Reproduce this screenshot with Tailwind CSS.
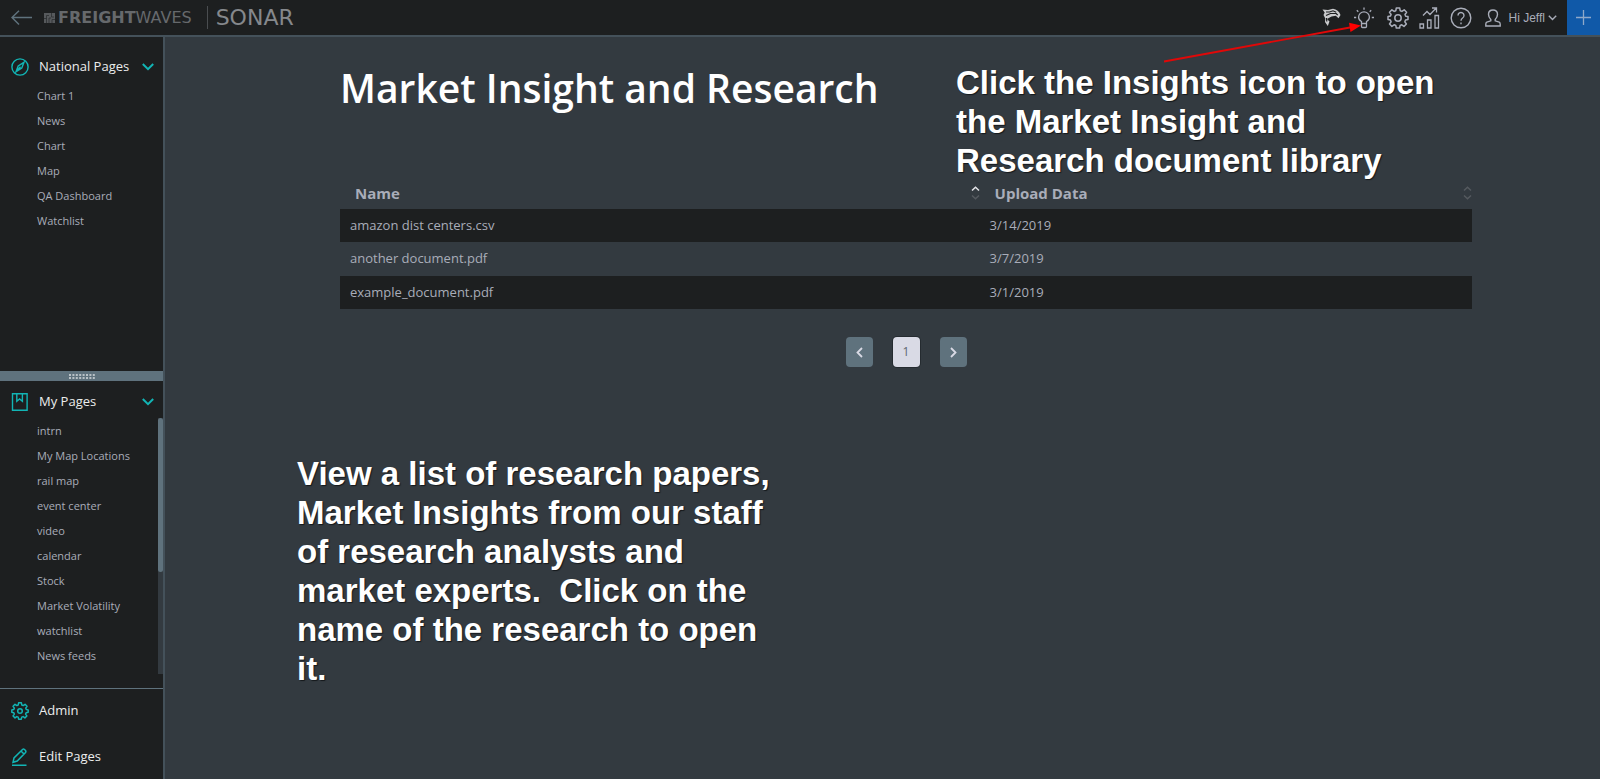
<!DOCTYPE html>
<html lang="en">
<head>
  <meta charset="UTF-8" />
  <meta name="viewport" content="width=device-width, initial-scale=1.0" />
  <title>SONAR - Market Insight and Research</title>
  <script src="https://cdn.jsdelivr.net/npm/@tailwindcss/browser@4"></script>
</head>
<body class="relative h-screen flex flex-col overflow-hidden bg-[#333a40] text-[#a9adb9] font-['Open_Sans','Noto_Sans',sans-serif]">

  <!-- Top bar -->
  <header class="h-[37px] shrink-0 flex items-center bg-[#1d1f20] border-b-2 border-[#44515a]">
    <button class="ml-[11px] text-[#5f727d]" aria-label="Back">
      <svg class="w-[22px] h-4" viewBox="0 0 22 16" fill="none" stroke="currentColor" stroke-width="1.5"><path d="M21 7.500H1M8 .8 1 7.500l7 7"/></svg>
    </button>
    <a href="#" class="ml-[11px] flex items-center text-[#66696c] font-['DejaVu_Sans',sans-serif] text-base leading-5">
      <svg class="w-[11px] h-[10px] mr-[3px]" viewBox="0 0 11 10"><path fill="#56595c" d="M0 0h11v10H0z"/><path d="M2.500 10V2.500H5M5 10V5h2M7.500 0v4H10M8 10V6.500h3M0 5.500h2.500" fill="none" stroke="#2c2e30" stroke-width=".8"/></svg>
      <b>FREIGHT</b><span>WAVES</span>
    </a>
    <span class="ml-[15px] w-px h-[23px] bg-[#4a4d50]"></span>
    <a href="#" class="ml-2 text-[#85888c] font-['DejaVu_Sans',sans-serif] text-[22px] leading-6">SONAR</a>

    <div class="ml-auto h-full flex items-center text-[#a9adb9]">
      <button class="mr-[13px]" aria-label="Hawk">
        <svg class="w-[19px] h-[19px]" viewBox="0 0 19 19"><path fill="#c9cacc" d="M.5 1.500 6 2l5-1.200q5.500 1 7.500 6.200l-2 3.200-2.700-2.400-4.300.8L5 11l2.500 2.500-1.700 4.500L3 14l.3-3.500L1.500 7l1.200-2.500z"/><path fill="none" stroke="#1d1f20" stroke-width="1.200" d="M4 4h3.500L11 2.800l3.200 1.500M4 7.500 8.500 5.500h5.700l1.500 1.700M4.800 13.500 4.500 10"/></svg>
      </button>
      <button class="mr-[13px]" aria-label="Insights">
        <svg class="w-5 h-[22px]" viewBox="0 0 20 22" fill="none" stroke="currentColor" stroke-width="1.300"><path d="M7.500 16.500v-2C5.500 13.500 4.600 12 4.600 10.200a5.400 5.400 0 0 1 10.800 0c0 1.800-.9 3.300-2.900 4.300v2zM7.500 16.500v3q0 1 1 1h3q1 0 1-1v-3M10 .5v2.200M0 10.500h2.200M17.800 10.500H20M2.800 3.300l1.500 1.500M17.200 3.300l-1.500 1.500"/></svg>
      </button>
      <button class="mr-[10px]" aria-label="Settings">
        <svg class="w-[22px] h-[22px]" viewBox="0 0 22 22" fill="none" stroke="currentColor" stroke-width="1.500" stroke-linejoin="round"><path d="M9.300 1h3.400l.5 2.700 1.700.7 2.300-1.600 2.400 2.400L18 7.500l.7 1.700 2.300.4v3l-2.500.5-.7 1.700 1.600 2.200-2.400 2.400-2.200-1.600-1.700.7-.5 2.500H9.300l-.5-2.500-1.700-.7-2.200 1.600L2.500 17l1.600-2.200-.7-1.700L1 12.600v-3l2.400-.5.7-1.600-1.600-2.300 2.400-2.400 2.300 1.600 1.600-.7z"/><circle cx="11" cy="11" r="3.200"/></svg>
      </button>
      <button class="mr-[10px]" aria-label="Statistics">
        <svg class="w-[21px] h-[22px]" viewBox="0 0 21 22" fill="none" stroke="currentColor" stroke-width="1.300"><path d="M1 17h3.500v4H1zM8.500 13H12v8H8.500zM16 8.500h3.500V21H16zM4 8.500l4-4 3 3L17 1.300M13 1h4.500v4.500"/></svg>
      </button>
      <button class="mr-[13px]" aria-label="Help">
        <svg class="w-[22px] h-[22px]" viewBox="0 0 22 22" fill="none" stroke="currentColor" stroke-width="1.400"><circle cx="11" cy="11" r="9.800"/><path d="M8 8.500a3 3 0 1 1 4.600 2.500c-1.200.8-1.600 1.300-1.600 2.700M11 15.500v1.700"/></svg>
      </button>
      <button class="mr-[10px] flex items-center gap-2 text-xs font-['Liberation_Sans',sans-serif]">
        <svg class="w-4 h-[18px]" viewBox="0 0 16 18" fill="none" stroke="currentColor" stroke-width="1.400"><path d="M5.800 10.500C4.300 9 3.500 7.300 3.500 5.200 3.500 2.600 5.300 1 8 1s4.500 1.600 4.500 4.200c0 2.100-.8 3.800-2.300 5.300v1.300l4 1.400q1 .5 1 2V17H.8v-1.800q0-1.500 1-2l4-1.400z"/></svg>
        <span class="flex items-center gap-[3px]">Hi Jeffl
          <svg class="w-[9px] h-[6px]" viewBox="0 0 9 6" fill="none" stroke="currentColor" stroke-width="1.400"><path d="m.8.8 3.700 3.700L8.200.8"/></svg>
        </span>
      </button>
      <button class="w-[33px] h-full flex items-center justify-center bg-[#1059a8]" aria-label="Add page">
        <svg class="w-[15px] h-[15px]" viewBox="0 0 15 15" stroke="#8fa9c9" stroke-width="1.300"><path d="M7.500 0v15M0 7.500h15"/></svg>
      </button>
    </div>
  </header>

  <div class="flex-1 min-h-0 flex">
    <!-- Sidebar -->
    <nav class="w-[165px] shrink-0 flex flex-col bg-[#1d1f20] border-r-2 border-[#44515a] text-[11px]">
      <section class="flex-1 min-h-0 pt-[18px]">
        <button class="w-full h-6 pl-[11px] pr-[9px] flex items-center text-[13px] font-medium text-[#eceded]">
          <svg class="w-[18px] h-[18px] mr-[10px]" viewBox="0 0 18 18" fill="none" stroke="#12b5b5" stroke-width="1.400"><circle cx="9" cy="9" r="8.100"/><path d="M13 4.300 10.800 10 5 13.700 7.200 8zM5 13.700l4.500-5"/></svg>
          National Pages
          <svg class="w-3 h-2 ml-auto" viewBox="0 0 12 8" fill="none" stroke="#12b5b5" stroke-width="2"><path d="m.8 1 5.200 5.200L11.200 1"/></svg>
        </button>
        <ul class="mt-1 pl-[37px] leading-[25px]">
          <li><a href="#">Chart 1</a></li>
          <li><a href="#">News</a></li>
          <li><a href="#">Chart</a></li>
          <li><a href="#">Map</a></li>
          <li><a href="#">QA Dashboard</a></li>
          <li><a href="#">Watchlist</a></li>
        </ul>
      </section>

      <!-- Drag handle between the two lists -->
      <div class="h-[10px] shrink-0 flex items-center justify-center bg-[#5f727d]">
        <svg class="w-[26px] h-[5px]" viewBox="0 0 26 5"><path d="M0 1h26M0 4h26" stroke="#b9c1c6" stroke-width="2" stroke-dasharray="2 1.400"/></svg>
      </div>

      <section class="h-[307px] shrink-0 flex flex-col pt-[9px] pb-[14px]">
        <button class="w-full h-6 pl-[11px] pr-[9px] flex items-center text-[13px] font-medium text-[#eceded]">
          <svg class="w-[18px] h-[18px] mr-[10px]" viewBox="0 0 18 18" fill="none" stroke="#12b5b5" stroke-width="1.400"><path d="M1.500.8h14.600v16.400H1.500zM5.800.8v7.400l2.800-2.300 2.800 2.300V.8"/></svg>
          My Pages
          <svg class="w-3 h-2 ml-auto" viewBox="0 0 12 8" fill="none" stroke="#12b5b5" stroke-width="2"><path d="m.8 1 5.200 5.200L11.200 1"/></svg>
        </button>
        <div class="flex-1 min-h-0 mt-1 flex justify-between">
          <ul class="pl-[37px] leading-[25px]">
            <li><a href="#">intrn</a></li>
            <li><a href="#">My Map Locations</a></li>
            <li><a href="#">rail map</a></li>
            <li><a href="#">event center</a></li>
            <li><a href="#">video</a></li>
            <li><a href="#">calendar</a></li>
            <li><a href="#">Stock</a></li>
            <li><a href="#">Market Volatility</a></li>
            <li><a href="#">watchlist</a></li>
            <li><a href="#">News feeds</a></li>
          </ul>
          <div class="w-[5px] bg-[#333a40]">
            <div class="h-3/5 rounded-sm bg-[#5f727d]"></div>
          </div>
        </div>
      </section>

      <div class="flex flex-col gap-[2px] border-t border-[#5f727d] text-[13px] font-medium text-[#eceded]">
        <a href="#" class="h-11 pl-[11px] flex items-center gap-[10px]">
          <svg class="w-[18px] h-[18px]" viewBox="0 0 22 22" fill="none" stroke="#12b5b5" stroke-width="1.800" stroke-linejoin="round"><path d="M9.300 1h3.400l.5 2.700 1.700.7 2.300-1.600 2.400 2.400L18 7.500l.7 1.700 2.300.4v3l-2.500.5-.7 1.700 1.600 2.200-2.400 2.400-2.200-1.600-1.700.7-.5 2.500H9.300l-.5-2.500-1.700-.7-2.200 1.600L2.500 17l1.600-2.200-.7-1.700L1 12.600v-3l2.400-.5.7-1.600-1.600-2.300 2.400-2.400 2.300 1.600 1.600-.7z"/><circle cx="11" cy="11" r="2.800"/></svg>
          Admin
        </a>
        <a href="#" class="h-11 pl-[11px] flex items-center gap-[10px]">
          <svg class="w-[18px] h-[18px]" viewBox="0 0 18 18" fill="none" stroke="#12b5b5" stroke-width="1.500"><path d="M2 14.300 3 10 11.500 1.500q1-.8 2 0l1 1q.8 1 0 2L6.200 13zM10 3l3 3M1 17.200h14.500"/></svg>
          Edit Pages
        </a>
      </div>
    </nav>

    <!-- Document library -->
    <main class="flex-1 min-w-0 pt-6">
      <div class="pl-[175px] pr-32">
        <h1 class="text-[39px] leading-[54px] font-semibold text-white">Market Insight and Research</h1>

        <table class="mt-16 w-full table-fixed text-left text-[13px]">
          <thead>
            <tr class="h-[30px] text-[15px]">
              <th class="w-[56.500%] pl-[15px] pb-[2px] font-bold">
                <button class="w-full flex items-center justify-between">Name
                  <svg class="w-[9px] h-[14px]" viewBox="0 0 9 14" fill="none" stroke-width="1.500"><path d="m1 4.500 3.500-3.300L8 4.500" stroke="#e4e5e8"/><path d="m1 9.500 3.500 3.300L8 9.500" stroke="#555a5f"/></svg>
                </button>
              </th>
              <th class="pl-[15px] pb-[2px] font-bold">
                <button class="w-full flex items-center justify-between">Upload Data
                  <svg class="w-[9px] h-[14px]" viewBox="0 0 9 14" fill="none" stroke="#555a5f" stroke-width="1.500"><path d="m1 4.500 3.500-3.300L8 4.500M1 9.500l3.500 3.300L8 9.500"/></svg>
                </button>
              </th>
            </tr>
          </thead>
          <tbody>
            <tr class="h-[33px] bg-[#1d1f20]">
              <td class="pl-[10px]"><a href="#">amazon dist centers.csv</a></td>
              <td class="pl-[10px]">3/14/2019</td>
            </tr>
            <tr class="h-[34px]">
              <td class="pl-[10px]"><a href="#">another document.pdf</a></td>
              <td class="pl-[10px]">3/7/2019</td>
            </tr>
            <tr class="h-[33px] bg-[#1d1f20]">
              <td class="pl-[10px]"><a href="#">example_document.pdf</a></td>
              <td class="pl-[10px]">3/1/2019</td>
            </tr>
          </tbody>
        </table>

        <div class="mt-7 flex justify-center gap-5 text-xs">
          <button class="w-[27px] h-[30px] flex items-center justify-center rounded bg-[#5f727d]" aria-label="Previous page">
            <svg class="w-[7px] h-[11px]" viewBox="0 0 7 11" fill="none" stroke="#d9dae5" stroke-width="1.800"><path d="M6 1 1.500 5.500 6 10"/></svg>
          </button>
          <button class="w-[27px] h-[30px] rounded bg-[#d9dae5] text-[#5f6670] ring-1 ring-[#252b30]">1</button>
          <button class="w-[27px] h-[30px] flex items-center justify-center rounded bg-[#5f727d]" aria-label="Next page">
            <svg class="w-[7px] h-[11px]" viewBox="0 0 7 11" fill="none" stroke="#d9dae5" stroke-width="1.800"><path d="M1 1l4.500 4.500L1 10"/></svg>
          </button>
        </div>
      </div>

      <p class="mt-[87px] ml-[132px] w-[490px] whitespace-pre-wrap font-['Liberation_Sans',sans-serif] font-bold text-[33px] leading-[39px] text-white text-shadow-[1px_1px_1px_#14181b]">View a list of research papers, Market Insights from our staff of research analysts and market experts.  Click on the name of the research to open it.</p>
    </main>
  </div>

  <!-- Callout pointing at the Insights icon -->
  <svg class="absolute top-[22px] right-[238px] w-[200px] h-[42px]" viewBox="0 0 200 42"><path d="M2 39.500 188 5.500" stroke="#e00808" stroke-width="1.800"/><path d="M199 3.500 187 .8 188.500 10z" fill="#f00"/></svg>
  <p class="absolute top-[63px] right-[154px] w-[490px] font-['Liberation_Sans',sans-serif] font-bold text-[33px] leading-[39px] text-white text-shadow-[1px_1px_1px_#14181b]">Click the Insights icon to open the Market Insight and Research document library</p>
</body>
</html>
